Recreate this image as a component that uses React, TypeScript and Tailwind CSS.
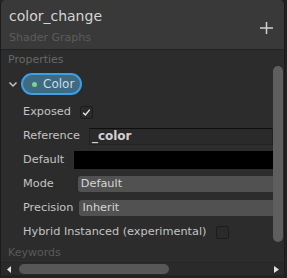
import React from 'react';

const font = { fontFamily: '"DejaVu Sans", "Liberation Sans", sans-serif' };

function Check({ checked }: { checked?: boolean }) {
  return (
    <div className="w-[13px] h-[13px] rounded-[2px] bg-[#2a2a2a] border border-[#1c1c1c] flex items-center justify-center">
      {checked && (
        <svg width="9" height="9" viewBox="0 0 9 9">
          <path d="M1.2 4.8 L3.4 7 L7.8 1.6" fill="none" stroke="#e6e6e6" strokeWidth="1.4" />
        </svg>
      )}
    </div>
  );
}

function Row({ label, children }: { label: string; children?: React.ReactNode }) {
  return (
    <div className="h-6 flex items-center pl-[22px] text-[11.3px] text-[#c4c4c4] whitespace-nowrap">
      <span>{label}</span>
      {children}
    </div>
  );
}

export default function App() {
  return (
    <div className="w-[287px] h-[278px] bg-[#222222] overflow-hidden" style={font}>
      <div className="w-[285px] h-[275px] rounded-t-[5px] border-l border-r border-[#1b1b1b] bg-[#2c2c2c] flex flex-col overflow-hidden">
        {/* header */}
        <div className="h-[50px] shrink-0 bg-[#393939] border-b border-[#222222] flex items-start justify-between pl-[8px] pr-[11px]">
          <div className="pt-[8px]">
            <div className="text-[14px] leading-4 text-[#d4d4d4]">color_change</div>
            <div className="text-[11px] leading-4 mt-[6px] text-[#5c5c5c]">Shader Graphs</div>
          </div>
          <svg className="mt-[22px]" width="13" height="12" viewBox="0 0 13 12">
            <path d="M6.5 0 V12 M0 6 H13" stroke="#cfcfcf" strokeWidth="1.5" />
          </svg>
        </div>

        <div className="h-4 shrink-0 pl-[7px] pt-[2px] text-[11px] leading-4 text-[#686868]">Properties</div>

        {/* scroll area */}
        <div className="flex flex-1 min-h-0">
          <div className="flex-1 min-w-0 overflow-hidden">
            <div className="mt-[7px] h-[22px] flex items-center">
              <svg className="ml-[7px] mr-[3px]" width="10" height="8" viewBox="0 0 10 8">
                <path d="M1.5 2.5 L5 6 L8.5 2.5" fill="none" stroke="#c4c4c4" strokeWidth="1.5" />
              </svg>
              <div className="h-[22px] w-[61px] rounded-full border-2 border-[#3a9fe3] bg-[#3f6b82] flex items-center pl-[9px] gap-[6px]">
                <div className="w-[5px] h-[5px] rounded-full bg-[#7fd18e]" />
                <span className="text-[12px] text-[#c8dde8]">Color</span>
              </div>
            </div>

            <div className="mt-[5px]">
              <Row label="Exposed">
                <div className="ml-[9px]">
                  <Check checked />
                </div>
              </Row>
              <Row label="Reference">
                <div className="ml-[9px] flex-1 h-[17px] bg-[#2a2a2a] border border-[#212121] border-t-[#0e0e0e] flex items-center pl-[2px] text-[12px] font-bold text-[#d2d2d2]">
                  _color
                </div>
              </Row>
              <Row label="Default">
                <div className="ml-[10px] flex-1 h-[18px] bg-black" />
              </Row>
              <Row label="Mode">
                <div className="ml-[24px] flex-1 h-4 rounded-l-[3px] bg-[#515151] flex items-center pl-[3px] text-[#d6d6d6]">
                  Default
                </div>
              </Row>
              <Row label="Precision">
                <div className="ml-[6px] flex-1 h-4 rounded-l-[3px] bg-[#515151] flex items-center pl-[3px] text-[#d6d6d6]">
                  Inherit
                </div>
              </Row>
              <Row label="Hybrid Instanced (experimental)">
                <div className="ml-[10px]">
                  <Check />
                </div>
              </Row>
            </div>
          </div>
          <div className="w-[11px] shrink-0">
            <div className="w-[10px] h-[176px] rounded-full bg-[#5e5e5e]" />
          </div>
        </div>

        <div className="h-[19px] shrink-0 pl-[7px] text-[11px] leading-[19px] text-[#5a5a5a]">Keywords</div>

        {/* horizontal scrollbar */}
        <div className="h-[13px] shrink-0 border-t border-[#252525] bg-[#2a2a2a] flex items-center">
          <svg className="ml-[6px] mr-[8px]" width="4" height="7" viewBox="0 0 4 7">
            <path d="M4 0 L0 3.5 L4 7 Z" fill="#e0e0e0" />
          </svg>
          <div className="w-[150px] h-[10px] rounded-full bg-[#575757]" />
          <div className="flex-1" />
          <svg className="mr-[3px]" width="8" height="9" viewBox="0 0 8 9">
            <path d="M1 1 L6 4.5 L1 8 Z" fill="#e0e0e0" />
          </svg>
        </div>
      </div>
    </div>
  );
}
